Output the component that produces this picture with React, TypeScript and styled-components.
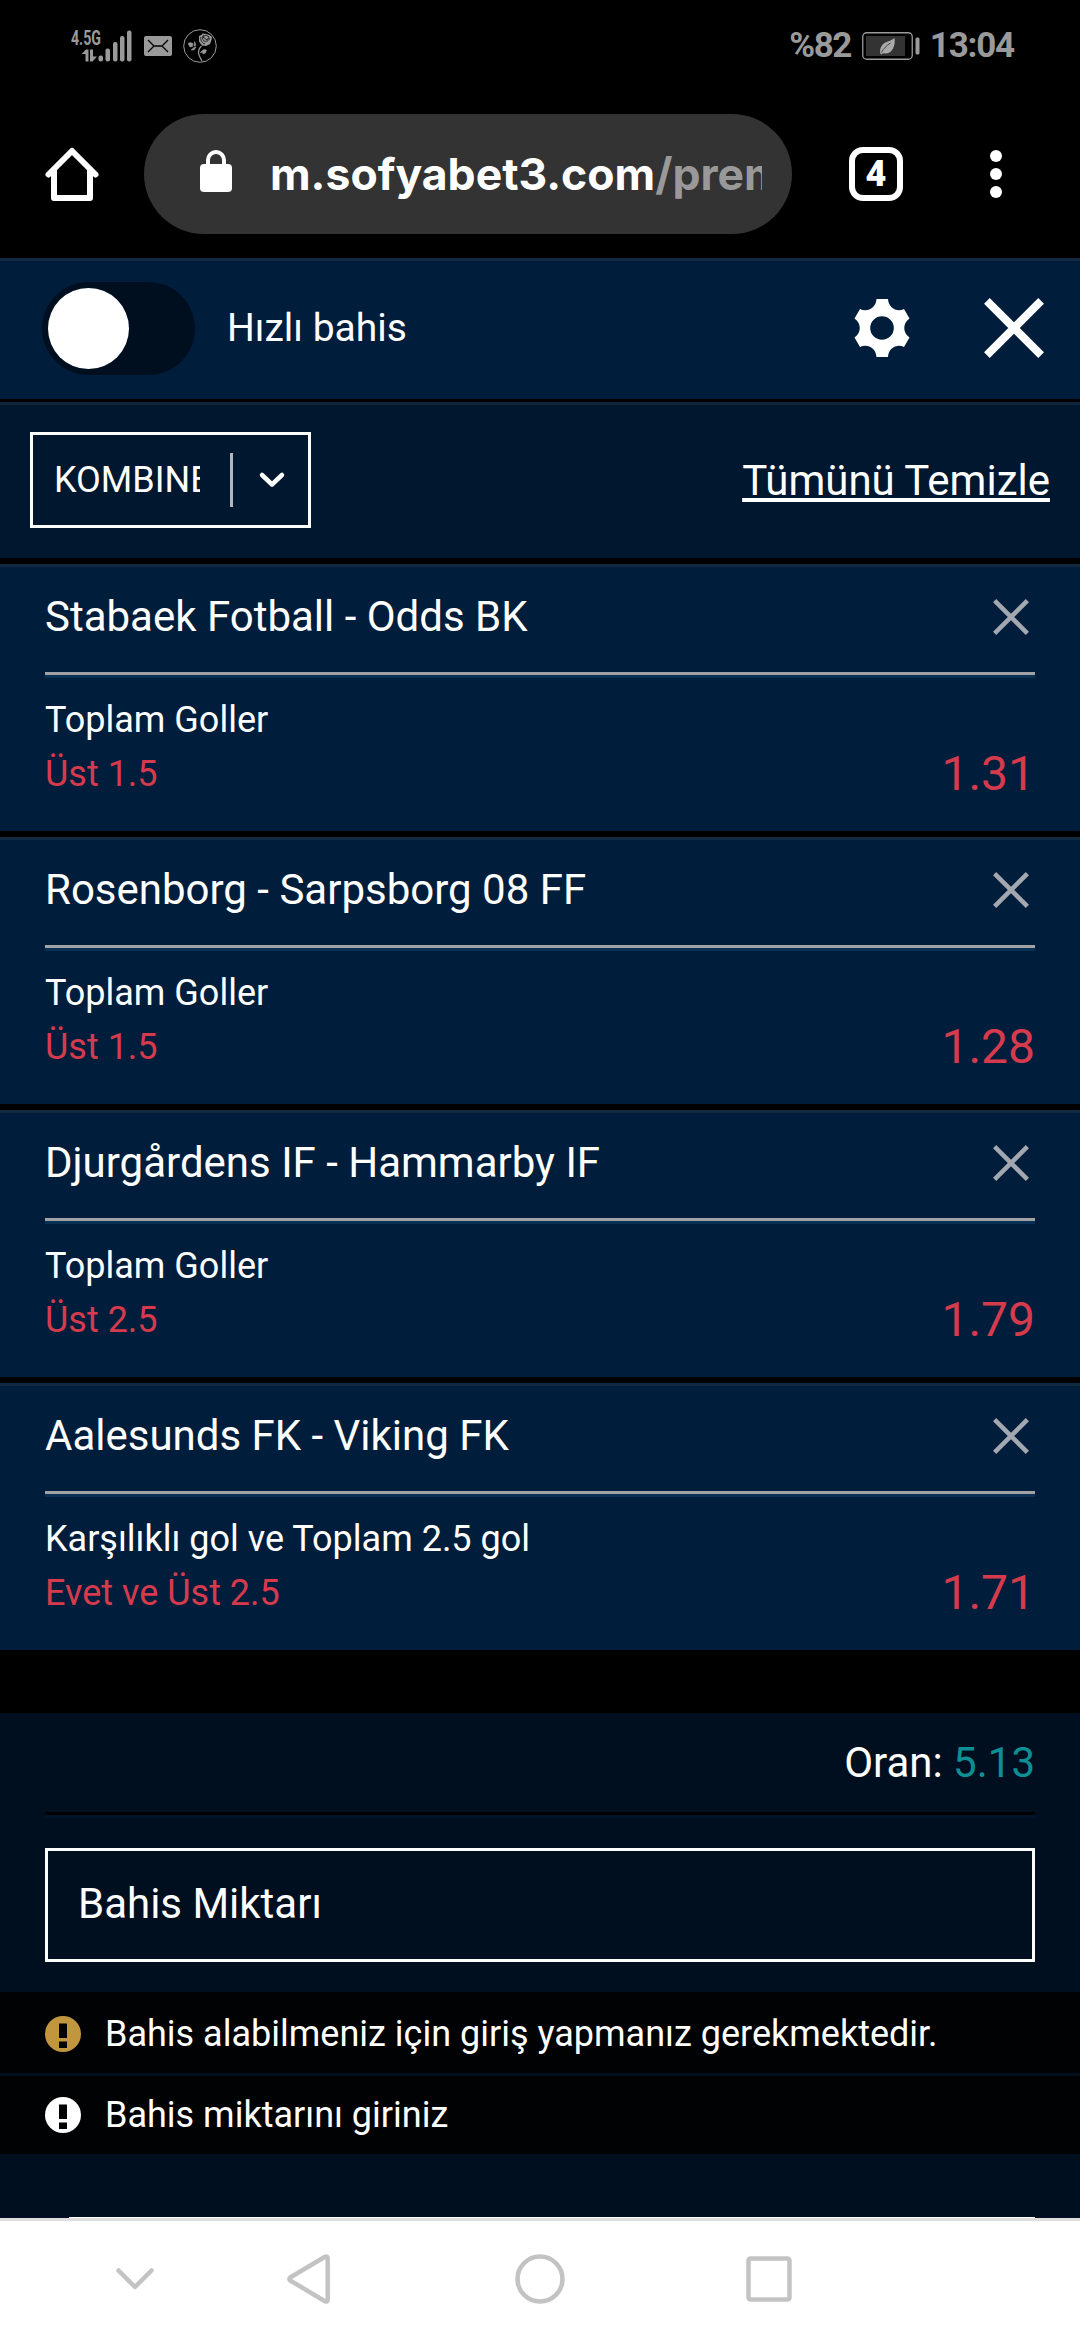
import React from "react";
import styled, { createGlobalStyle } from "styled-components";

const GlobalStyle = createGlobalStyle`
  *, *::before, *::after { box-sizing: border-box; }
  body {
    margin: 0;
    background: #000;
    color: #fff;
    font-family: Roboto, "Liberation Sans", sans-serif;
  }
  svg { display: block; flex: none; overflow: visible; }
  button { font: inherit; color: inherit; background: none; border: 0; padding: 0; }
`;

const Screen = styled.div`
  width: 1080px;
  height: 2340px;
  display: flex;
  flex-direction: column;
  overflow: hidden;
`;

/* ---------- system status bar ---------- */
const StatusBar = styled.header`
  height: 92px;
  padding: 0 66px 0 71px;
  display: flex;
  align-items: center;
  justify-content: space-between;
  color: #9a9a9a;
`;

const StatusIcons = styled.div`
  display: flex;
  align-items: center;
`;

const StatusText = styled.span<{ $track: number }>`
  font: 700 35px/40px Roboto, sans-serif;
  letter-spacing: ${(p) => p.$track}px;
  white-space: nowrap;
`;

const BatteryBox = styled.div`
  margin: 0 10px 0 11px;
`;

/* ---------- browser toolbar ---------- */
const BrowserBar = styled.nav`
  height: 166px;
  padding: 22px 64px 24px 44px;
  display: flex;
  align-items: center;
`;

const AddressPill = styled.div`
  width: 648px;
  height: 120px;
  margin-left: 44px;
  padding: 0 30px 0 56px;
  border-radius: 60px;
  background: #333;
  display: flex;
  align-items: center;
  gap: 38px;
`;

const Url = styled.div`
  width: 492px;
  overflow: hidden;
  white-space: nowrap;
  font: 700 44.5px/64px Inter, Roboto, sans-serif;
`;

const UrlPath = styled.span`
  color: #999;
`;

const TabCount = styled.button`
  width: 54px;
  height: 54px;
  margin-left: 57px;
  border: 6px solid #fff;
  border-radius: 14px;
  font: 900 36px/43px Roboto, sans-serif;
  text-align: center;
`;

const MenuDots = styled.button`
  margin-left: 87px;
  display: grid;
  gap: 6px;
`;

const Dot = styled.i`
  width: 12px;
  height: 12px;
  border-radius: 50%;
  background: #fff;
`;

/* ---------- quick bet header ---------- */
const QuickBar = styled.section`
  height: 144px;
  padding: 0 36px 0 42px;
  border-top: 3px solid #142a42;
  border-bottom: 3px solid #000;
  background: #001e3b;
  display: flex;
  align-items: center;
`;

const Toggle = styled.button`
  width: 153px;
  height: 93px;
  margin-top: -3px;
  padding: 6px;
  border-radius: 47px;
  background: #000f20;
`;

const Knob = styled.span`
  display: block;
  width: 81px;
  height: 81px;
  border-radius: 50%;
  background: #fff;
`;

const QuickLabel = styled.span`
  flex: 1;
  margin: -5px 0 0 32px;
  font-size: 39px;
  line-height: 48px;
`;

const QuickActions = styled.div`
  display: flex;
  align-items: center;
  gap: 74px;
  margin-top: -4px;
`;

/* ---------- slip toolbar ---------- */
const SlipBar = styled.section`
  height: 156px;
  padding: 27px 30px 0;
  border-top: 3px solid #11253a;
  background: #001730;
  display: flex;
  align-items: flex-start;
  justify-content: space-between;
`;

const Select = styled.button`
  width: 281px;
  height: 96px;
  border: 3px solid #fff;
  padding-left: 21px;
  display: flex;
  align-items: center;
`;

const SelectValue = styled.span`
  width: 146px;
  margin-right: 30px;
  overflow: hidden;
  white-space: nowrap;
  text-align: left;
  font-size: 36px;
  line-height: 48px;
`;

const SelectRule = styled.i`
  width: 3px;
  height: 54px;
  margin-right: 26px;
  background: #b3b7bb;
`;

const ClearAll = styled.a`
  margin-top: 25px;
  font-size: 42px;
  line-height: 48px;
  text-decoration: underline;
  text-decoration-thickness: 4px;
  text-underline-offset: 3px;
  text-decoration-skip-ink: none;
`;

/* ---------- selections ---------- */
const BetList = styled.ul`
  list-style: none;
  margin: 0;
  padding: 6px 0 0;
  display: grid;
  gap: 6px;
`;

const BetCard = styled.li`
  height: 267px;
  padding: 0 45px;
  border-top: 3px solid #122942;
  background: #001e3b;
`;

const BetHead = styled.div`
  height: 108px;
  padding: 0 6px 6px 0;
  border-bottom: 3px solid #a0a2a5;
  box-shadow: 0 3px 0 #0b3056;
  display: flex;
  align-items: center;
  justify-content: space-between;
`;

const Teams = styled.h2`
  margin: 0;
  font-weight: 400;
  font-size: 42px;
  line-height: 54px;
`;

const BetBody = styled.div`
  display: flex;
  justify-content: space-between;
  align-items: flex-end;
  padding-top: 18px;
`;

const Market = styled.div`
  font-size: 36px;
  line-height: 54px;
`;

const Pick = styled.div`
  color: #d63b4d;
`;

const Odds = styled.div`
  color: #d63b4d;
  font-size: 48px;
  line-height: 54px;
`;

/* ---------- stake ---------- */
const Stake = styled.section`
  height: 279px;
  margin-top: 63px;
  padding: 0 45px;
  background: #000f20;
`;

const TotalRow = styled.div`
  height: 102px;
  padding-top: 23px;
  border-bottom: 3px solid #000;
  box-shadow: 0 3px 0 #00152c;
  text-align: right;
  font-size: 42px;
  line-height: 54px;
`;

const TotalValue = styled.span`
  color: #0d8f96;
`;

const StakeInput = styled.div`
  height: 114px;
  margin-top: 33px;
  padding: 0 30px 2px;
  border: 3px solid #fff;
  display: flex;
  align-items: center;
  font-size: 42px;
  line-height: 48px;
`;

/* ---------- notices ---------- */
const Notices = styled.section`
  display: grid;
  grid-template-rows: 81px 78px;
  gap: 3px;
  background: #000f20;
`;

const Notice = styled.div<{ $drop?: number }>`
  padding: ${(p) => p.$drop ?? 0}px 45px 0;
  background: #010204;
  display: flex;
  align-items: center;
  gap: 24px;
  font-size: 36px;
  line-height: 48px;
`;

const NextPanel = styled.section`
  height: 64px;
  padding: 0 45px 0 69px;
  background: #000f20;
  display: flex;
  align-items: flex-end;
`;

const PanelEdge = styled.i`
  flex: 1;
  height: 1px;
  background: #fff;
`;

/* ---------- system navigation ---------- */
const NavBar = styled.footer`
  height: 122px;
  padding: 0 288px 3px 116px;
  border-top: 3px solid #dedede;
  background: #fff;
  display: flex;
  align-items: center;
`;

const NavKey = styled.button<{ $gap: number }>`
  margin-left: ${(p) => p.$gap}px;
  color: #c3c3c3;
`;

/* ---------- drawings ---------- */
const SignalIcon = () => (
  <svg width="61" height="34" viewBox="0 0 61 34" fill="currentColor">
    <text x="0" y="15.500" fontFamily="Roboto, sans-serif" fontWeight="700" fontSize="21" textLength="30" lengthAdjust="spacingAndGlyphs">4.5G</text>
    <path d="M10.500 25L15 20.500h2.500v12h-3v-7.500zM19 20.500h3v7h4L21.500 32.500H19z" />
    <rect x="27.500" y="26.500" width="4.500" height="6" rx="2" />
    <rect x="34.500" y="19.500" width="4.500" height="13" rx="2" />
    <rect x="42" y="13" width="4.500" height="19.500" rx="2" />
    <rect x="49" y="7" width="4.500" height="25.500" rx="2" />
    <rect x="56" y="1.500" width="4.500" height="31" rx="2" />
  </svg>
);

const MailSvg = styled.svg`
  margin-left: 12px;
`;

const MailIcon = () => (
  <MailSvg width="28" height="20" viewBox="0 0 28 20">
    <rect width="28" height="20" rx="2" fill="currentColor" />
    <path d="M4 4l6 6h8l6-6M4 16l6-6M24 16l-6-6" fill="none" stroke="#000" strokeWidth="1.300" />
  </MailSvg>
);

const RoseSvg = styled.svg`
  margin-left: 11px;
`;

const RoseIcon = () => (
  <RoseSvg width="34" height="34" viewBox="0 0 34 34" fill="none" stroke="currentColor">
    <circle cx="17" cy="17" r="16.300" strokeWidth="1" />
    <path d="M16 7l2.500-1 1-1.500 4 .5 3 1 2.500 2-.5 3-1.500 4-4 2-4-.5-3-4z" fill="currentColor" stroke="none" />
    <path d="M21 6c-2 1-2 4 0 6 2 1 5 0 5.500-3M20 8l3-2 3 2-2 3zM18 8c-1 3 1 6 4 7" stroke="#000" strokeWidth="0.800" />
    <path d="M18.500 17c-5 5-3 9 .5 15M17.500 24c1-2 2-2.500 4-2.500" strokeWidth="1.200" />
    <path d="M5 14.500l2.500-1 2.500 1-.5 3-2.500.5zM11.500 12.500l1.300 3-.8 2-1-1zM8 21l3-2.500 2-.5-2 3zM19 22l2-1.500 2.500.5-1 3-2.500 1z" fill="currentColor" strokeWidth="0.500" />
  </RoseSvg>
);

const BatteryIcon = () => (
  <svg width="58" height="28" viewBox="0 0 58 28">
    <rect x="0.750" y="0.750" width="49.500" height="26.500" rx="4" fill="none" stroke="currentColor" strokeWidth="1.300" />
    <rect x="4" y="4" width="39" height="20" fill="#333" />
    <rect x="53.500" y="5.500" width="4" height="17" rx="1.500" fill="currentColor" />
    <path d="M18.500 22c-1-4 0-9 5-11.500 3-1.500 6-2 9-4.500 1 6-1 12-5 14.500-2.500 1.500-5.500 1-6.500.5l-1.500 1.500z" fill="#aaa" />
    <path d="M19.500 20.500c2-4 5-7 9-9.500" stroke="#444" strokeWidth="1" fill="none" />
  </svg>
);

const HomeIcon = () => (
  <svg width="56" height="56" viewBox="0 0 56 56" fill="none" stroke="#fff" strokeWidth="6" strokeLinecap="round" strokeLinejoin="round">
    <path d="M4.500 28.500L28 5l23.500 23.500" />
    <path d="M10 24v28h36V24" />
  </svg>
);

const LockSvg = styled.svg`
  margin-top: -6px;
`;

const LockIcon = () => (
  <LockSvg width="32" height="42" viewBox="0 0 32 42">
    <rect y="14" width="32" height="28" rx="4" fill="#fff" />
    <path d="M8 15v-5a8 8 0 0 1 16 0v5" fill="none" stroke="#fff" strokeWidth="4" />
  </LockSvg>
);

const GearIcon = () => (
  <svg width="56" height="60" viewBox="-28 -30 56 60">
    <path
      fillRule="evenodd"
      fill="#fff"
      d="M-5.500-29H6C6.500-20 15-15.500 22-19l5.500 9.500c-7 4.500-7 14.500 0 19L22 19C15 15.500 6.500 20 6 29H-5.500C-6 20-14.500 15.500-22 19l-5.500-9.500c7-4.500 7-14.500 0-19L-22-19C-14.500-15.500-6-20-5.500-29zM0-11.800a11.800 11.800 0 1 0 0 23.600a11.800 11.800 0 1 0 0-23.600z"
    />
  </svg>
);

const CrossIcon = ({ size, weight, color }: { size: number; weight: number; color: string }) => {
  const inset = weight * 0.36;
  const far = size - inset;
  return (
    <svg width={size} height={size} fill="none" stroke={color} strokeWidth={weight}>
      <path d={`M${inset} ${inset}L${far} ${far}M${far} ${inset}L${inset} ${far}`} />
    </svg>
  );
};

const ChevronIcon = () => (
  <svg width="26" height="16" viewBox="0 0 26 16" fill="none" stroke="#fff" strokeWidth="4.500" strokeLinecap="round" strokeLinejoin="round">
    <path d="M3 3l10 9.500L23 3" />
  </svg>
);

const AlertIcon = ({ color }: { color: string }) => (
  <svg width="36" height="36" viewBox="0 0 36 36">
    <circle cx="18" cy="18" r="18" fill={color} />
    <path d="M14 7.500h8V22h-8zM14 25.500h8V32h-8z" fill="#010204" />
  </svg>
);

const bets = [
  { teams: "Stabaek Fotball - Odds BK", market: "Toplam Goller", pick: "Üst 1.5", odds: "1.31" },
  { teams: "Rosenborg - Sarpsborg 08 FF", market: "Toplam Goller", pick: "Üst 1.5", odds: "1.28" },
  { teams: "Djurgårdens IF - Hammarby IF", market: "Toplam Goller", pick: "Üst 2.5", odds: "1.79" },
  { teams: "Aalesunds FK - Viking FK", market: "Karşılıklı gol ve Toplam 2.5 gol", pick: "Evet ve Üst 2.5", odds: "1.71" },
];

export default function App() {
  return (
    <Screen>
      <GlobalStyle />
      <StatusBar>
        <StatusIcons>
          <SignalIcon />
          <MailIcon />
          <RoseIcon />
        </StatusIcons>
        <StatusIcons>
          <StatusText $track={-1.5}>%82</StatusText>
          <BatteryBox>
            <BatteryIcon />
          </BatteryBox>
          <StatusText $track={-1.2}>13:04</StatusText>
        </StatusIcons>
      </StatusBar>

      <BrowserBar>
        <HomeIcon />
        <AddressPill>
          <LockIcon />
          <Url>
            m.sofyabet3.com<UrlPath>/prem</UrlPath>
          </Url>
        </AddressPill>
        <TabCount>4</TabCount>
        <MenuDots>
          <Dot />
          <Dot />
          <Dot />
        </MenuDots>
      </BrowserBar>

      <QuickBar>
        <Toggle>
          <Knob />
        </Toggle>
        <QuickLabel>Hızlı bahis</QuickLabel>
        <QuickActions>
          <GearIcon />
          <CrossIcon size={60} weight={8} color="#fff" />
        </QuickActions>
      </QuickBar>

      <SlipBar>
        <Select>
          <SelectValue>KOMBINE</SelectValue>
          <SelectRule />
          <ChevronIcon />
        </Select>
        <ClearAll>Tümünü Temizle</ClearAll>
      </SlipBar>

      <BetList>
        {bets.map((bet) => (
          <BetCard key={bet.teams}>
            <BetHead>
              <Teams>{bet.teams}</Teams>
              <CrossIcon size={36} weight={4.5} color="#a3a8b0" />
            </BetHead>
            <BetBody>
              <Market>
                {bet.market}
                <Pick>{bet.pick}</Pick>
              </Market>
              <Odds>{bet.odds}</Odds>
            </BetBody>
          </BetCard>
        ))}
      </BetList>

      <Stake>
        <TotalRow>
          Oran: <TotalValue>5.13</TotalValue>
        </TotalRow>
        <StakeInput>Bahis Miktarı</StakeInput>
      </Stake>

      <Notices>
        <Notice $drop={3}>
          <AlertIcon color="#c2963f" />
          Bahis alabilmeniz için giriş yapmanız gerekmektedir.
        </Notice>
        <Notice>
          <AlertIcon color="#fff" />
          Bahis miktarını giriniz
        </Notice>
      </Notices>
      <NextPanel>
        <PanelEdge />
      </NextPanel>

      <NavBar>
        <NavKey $gap={0}>
          <svg width="38" height="22" viewBox="0 0 38 22" fill="none" stroke="currentColor" strokeWidth="4.500" strokeLinecap="round" strokeLinejoin="round">
            <path d="M2.500 2.500L19 19 35.500 2.500" />
          </svg>
        </NavKey>
        <NavKey $gap={133}>
          <svg width="43" height="50" viewBox="0 0 43 50" fill="none" stroke="currentColor" strokeWidth="4.500" strokeLinejoin="round">
            <path d="M3.200 23.500L38 2.800Q40.700 1.500 40.700 4.500v41Q40.700 48.500 38 47.200L3.200 26.500Q1.500 25 3.200 23.500z" />
          </svg>
        </NavKey>
        <NavKey $gap={185}>
          <svg width="50" height="50" viewBox="0 0 50 50" fill="none" stroke="currentColor" strokeWidth="4.500">
            <circle cx="25" cy="25" r="22.500" />
          </svg>
        </NavKey>
        <NavKey $gap={181}>
          <svg width="46" height="46" viewBox="0 0 46 46" fill="none" stroke="currentColor" strokeWidth="4.500">
            <rect x="2.500" y="2.500" width="41" height="41" rx="2" />
          </svg>
        </NavKey>
      </NavBar>
    </Screen>
  );
}
